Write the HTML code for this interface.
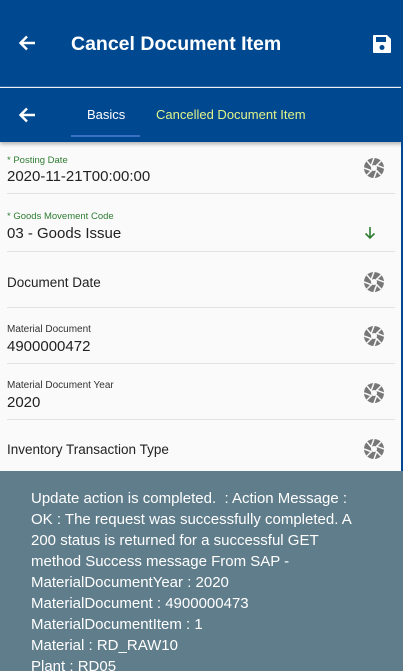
<!DOCTYPE html>
<html style="overflow:hidden;height:671px"><head><meta charset="utf-8"><style>
*{margin:0;padding:0;box-sizing:border-box}
body{width:403px;height:671px;overflow:hidden;background:#fafafa;font-family:"Liberation Sans",sans-serif;position:relative}
.hdr{position:absolute;left:0;top:0;width:403px;height:87px;background:#004990}
.tabs{position:absolute;left:0;top:88px;width:403px;height:54px;background:#004990;box-shadow:0 2px 4px rgba(0,0,0,.3)}
.line{position:absolute;left:0;top:86px;width:403px;height:1px;background:#2a68a8}
.title{position:absolute;left:71px;top:33px;color:#fff;font-weight:bold;font-size:19.5px}
.rb{position:absolute;right:0;top:0;width:2px;height:671px;background:#004990}
.row{position:absolute;left:7px;width:388px;border-bottom:1px solid #e2e2e2}
.lbl{position:absolute;left:0;font-size:10px;color:#333}
.val{position:absolute;left:0;font-size:15px;color:#222}
.g{color:#2e7d32}
.toast{position:absolute;left:0;top:471px;width:403px;height:200px;overflow:hidden;background:#607d8b;color:#fff;font-size:15px;line-height:21px;padding:17px 0 0 31px}
</style></head><body>
<div class="hdr"></div><div class="line"></div>
<svg style="position:absolute;left:18px;top:35px" width="18" height="16" viewBox="0 0 18 16"><path d="M17 8H3M9 1.5L2.5 8 9 14.5" stroke="#fff" stroke-width="2.4" fill="none"/></svg>
<div class="title">Cancel Document Item</div>
<svg style="position:absolute;left:372px;top:34px" width="20" height="20" viewBox="0 0 20 20"><path d="M1 2a1 1 0 011-1h13l4 4v13a1 1 0 01-1 1H2a1 1 0 01-1-1z" fill="#fff"/><rect x="4" y="3" width="10" height="5" fill="#004990"/><circle cx="10" cy="13.5" r="2.5" fill="#004990"/></svg>
<div class="tabs">
<svg style="position:absolute;left:18px;top:19px" width="18" height="16" viewBox="0 0 18 16"><path d="M17 8H3M9 1.5L2.5 8 9 14.5" stroke="#fff" stroke-width="2.4" fill="none"/></svg>
<div style="position:absolute;left:87px;top:19px;color:#fff;font-size:13px">Basics</div>
<div style="position:absolute;left:71px;top:47px;width:69px;height:2px;background:#3b6fc4"></div>
<div style="position:absolute;left:156px;top:19px;color:#e0f48a;font-size:13px">Cancelled Document Item</div>
</div>
<div class="rb"></div>

<div class="row" style="top:142px;height:52px"><div class="lbl g" style="top:13px;font-size:9.5px">* Posting Date</div><div class="val" style="top:26px">2020-11-21T00:00:00</div></div>
<div class="row" style="top:194px;height:58px"><div class="lbl g" style="top:17px;font-size:9.5px">* Goods Movement Code</div><div class="val" style="top:31px">03 - Goods Issue</div></div>
<div class="row" style="top:252px;height:56px"><div class="val" style="top:23px;font-size:13.5px">Document Date</div></div>
<div class="row" style="top:308px;height:56px"><div class="lbl" style="top:16px">Material Document</div><div class="val" style="top:30px">4900000472</div></div>
<div class="row" style="top:364px;height:56px"><div class="lbl" style="top:16px">Material Document Year</div><div class="val" style="top:30px">2020</div></div>
<div class="row" style="top:420px;height:51px;border:none"><div class="val" style="top:22px;font-size:13.5px">Inventory Transaction Type</div></div>

<svg style="position:absolute;left:364px;top:158px" width="20" height="20" viewBox="0 0 20 20"><circle cx="10" cy="10" r="10" fill="#777"/><g stroke="#fafafa" stroke-width="1.5"><path d="M10 0L7 8M20 10L12 7M10 20L13 12M0 10L8 13M3 3L8 9M17 3L12 8M17 17L12 12M3 17L8 12"/></g><circle cx="10" cy="10" r="3" fill="#fafafa"/></svg>
<svg style="position:absolute;left:364px;top:272px" width="20" height="20" viewBox="0 0 20 20"><circle cx="10" cy="10" r="10" fill="#777"/><g stroke="#fafafa" stroke-width="1.5"><path d="M10 0L7 8M20 10L12 7M10 20L13 12M0 10L8 13M3 3L8 9M17 3L12 8M17 17L12 12M3 17L8 12"/></g><circle cx="10" cy="10" r="3" fill="#fafafa"/></svg>
<svg style="position:absolute;left:364px;top:326px" width="20" height="20" viewBox="0 0 20 20"><circle cx="10" cy="10" r="10" fill="#777"/><g stroke="#fafafa" stroke-width="1.5"><path d="M10 0L7 8M20 10L12 7M10 20L13 12M0 10L8 13M3 3L8 9M17 3L12 8M17 17L12 12M3 17L8 12"/></g><circle cx="10" cy="10" r="3" fill="#fafafa"/></svg>
<svg style="position:absolute;left:364px;top:383px" width="20" height="20" viewBox="0 0 20 20"><circle cx="10" cy="10" r="10" fill="#777"/><g stroke="#fafafa" stroke-width="1.5"><path d="M10 0L7 8M20 10L12 7M10 20L13 12M0 10L8 13M3 3L8 9M17 3L12 8M17 17L12 12M3 17L8 12"/></g><circle cx="10" cy="10" r="3" fill="#fafafa"/></svg>
<svg style="position:absolute;left:364px;top:439px" width="20" height="20" viewBox="0 0 20 20"><circle cx="10" cy="10" r="10" fill="#777"/><g stroke="#fafafa" stroke-width="1.5"><path d="M10 0L7 8M20 10L12 7M10 20L13 12M0 10L8 13M3 3L8 9M17 3L12 8M17 17L12 12M3 17L8 12"/></g><circle cx="10" cy="10" r="3" fill="#fafafa"/></svg>
<svg style="position:absolute;left:364px;top:226px" width="12" height="14" viewBox="0 0 12 14"><path d="M6 1v11M1.5 7.5L6 12l4.5-4.5" stroke="#2e7d32" stroke-width="1.6" fill="none"/></svg>

<div class="toast">Update action is completed.&nbsp; : Action Message :<br>OK : The request was successfully completed. A<br>200 status is returned for a successful GET<br>method Success message From SAP -<br>MaterialDocumentYear : 2020<br>MaterialDocument : 4900000473<br>MaterialDocumentItem : 1<br>Material : RD_RAW10<br>Plant : RD05</div>
</body></html>
